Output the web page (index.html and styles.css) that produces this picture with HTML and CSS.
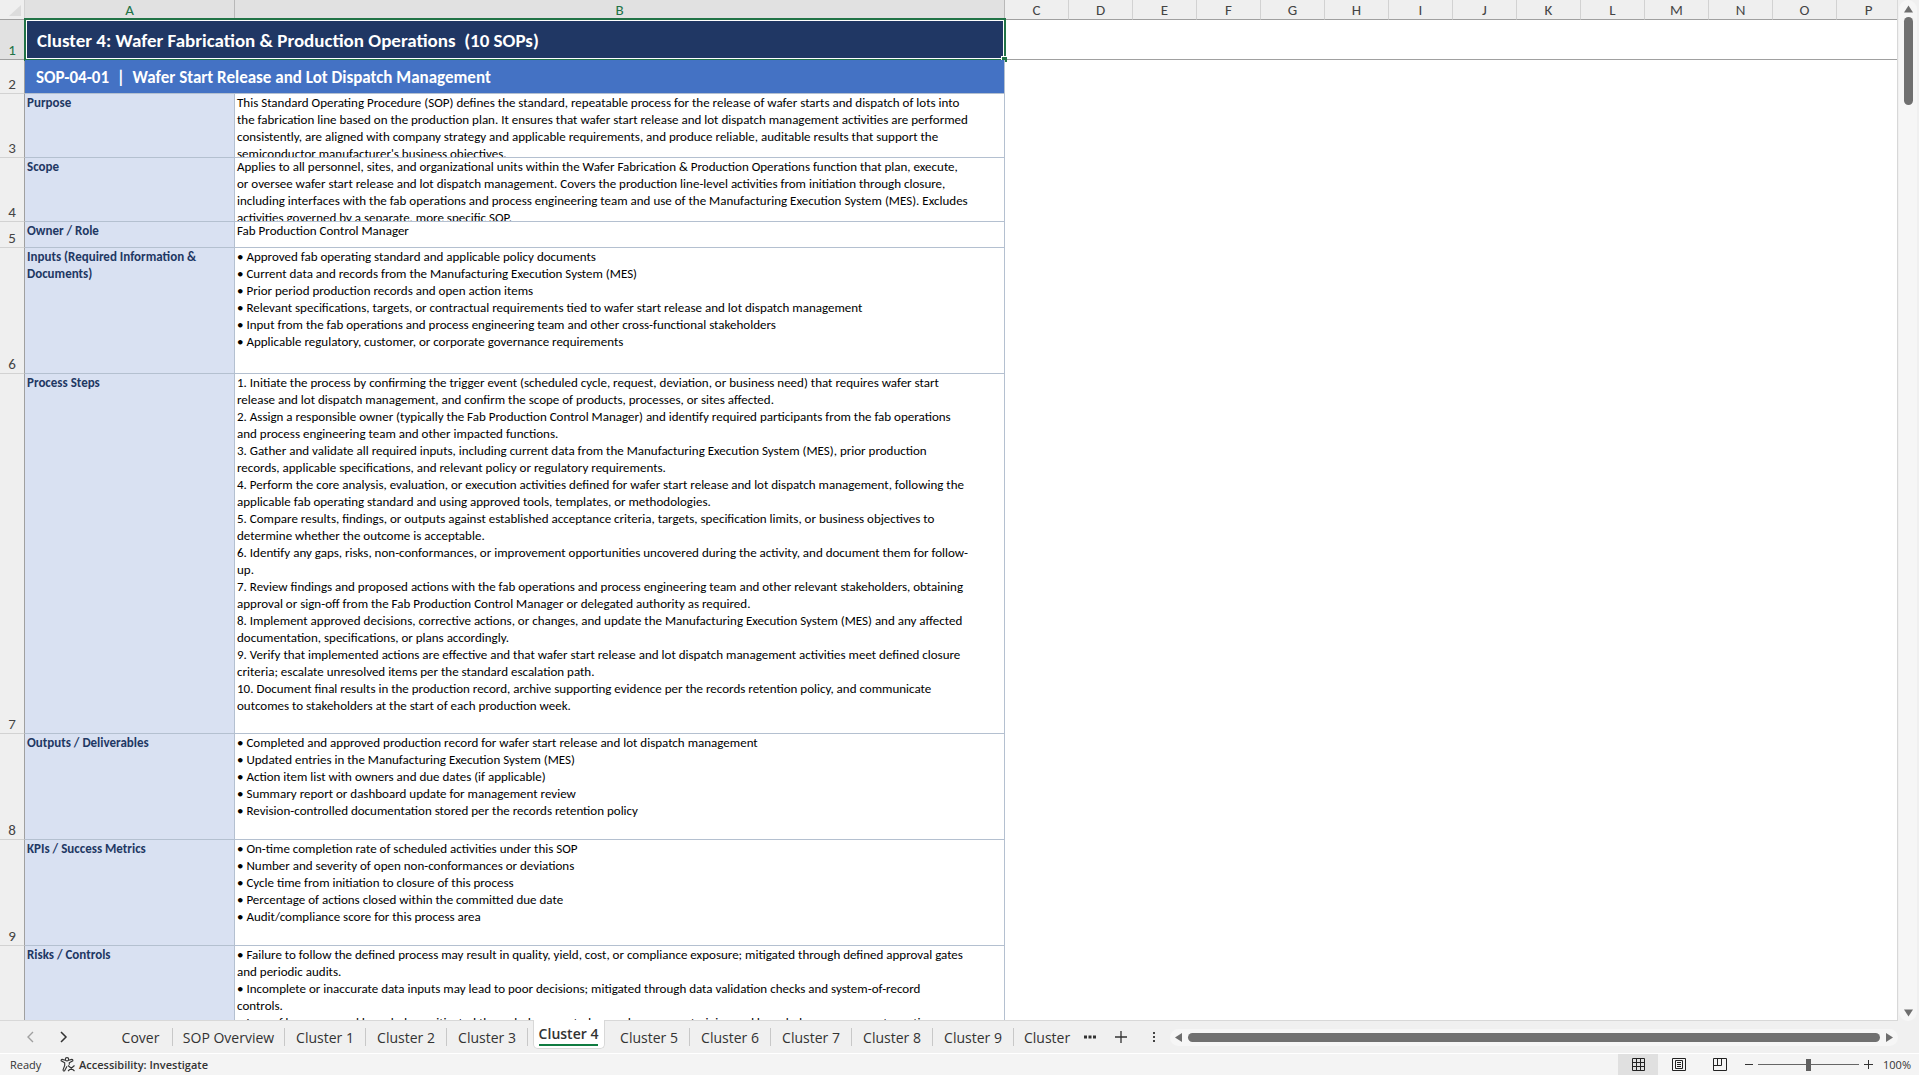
FILE: index.html
```html
<!DOCTYPE html>
<html lang="en">
<head>
<meta charset="utf-8">
<title>Cluster 4</title>
<link rel="stylesheet" href="styles.css">
</head>
<body>
<main class="workspace">
<div class="sheet">
<table class="grid">
<colgroup><col class="w-num"><col class="w-a"><col class="w-b"><col class="w-n" span="14"></colgroup>
<thead>
<tr><th class="corner"><svg width="24" height="17" viewBox="0 0 24 17"><path d="M21 3v11H9z" fill="#dcdcdc"/></svg></th><th class="on">A</th><th class="on">B</th><th>C</th><th>D</th><th>E</th><th>F</th><th>G</th><th>H</th><th>I</th><th>J</th><th>K</th><th>L</th><th>M</th><th>N</th><th>O</th><th>P</th></tr>
</thead>
<tbody>
<tr class="h40 frozen"><th class="on">1</th><td class="title" colspan="2">Cluster 4: Wafer Fabrication &amp; Production Operations&nbsp; (10 SOPs)<span class="selection"></span><span class="handle"></span></td><td colspan="14"></td></tr>
<tr class="h34"><th>2</th><td class="subtitle" colspan="2">SOP-04-01&nbsp; |&nbsp; Wafer Start Release and Lot Dispatch Management</td></tr>
<tr class="h64"><th>3</th><td class="label"><div>Purpose</div></td><td class="text"><div>This Standard Operating Procedure (SOP) defines the standard, repeatable process for the release of wafer starts and dispatch of lots into
the fabrication line based on the production plan. It ensures that wafer start release and lot dispatch management activities are performed
consistently, are aligned with company strategy and applicable requirements, and produce reliable, auditable results that support the
semiconductor manufacturer's business objectives.</div></td></tr>
<tr class="h64"><th>4</th><td class="label"><div>Scope</div></td><td class="text"><div>Applies to all personnel, sites, and organizational units within the Wafer Fabrication &amp; Production Operations function that plan, execute,
or oversee wafer start release and lot dispatch management. Covers the production line-level activities from initiation through closure,
including interfaces with the fab operations and process engineering team and use of the Manufacturing Execution System (MES). Excludes
activities governed by a separate, more specific SOP.</div></td></tr>
<tr class="h26"><th>5</th><td class="label"><div>Owner / Role</div></td><td class="text"><div>Fab Production Control Manager</div></td></tr>
<tr class="h126"><th>6</th><td class="label"><div>Inputs (Required Information &amp;
Documents)</div></td><td class="text"><div>• Approved fab operating standard and applicable policy documents
• Current data and records from the Manufacturing Execution System (MES)
• Prior period production records and open action items
• Relevant specifications, targets, or contractual requirements tied to wafer start release and lot dispatch management
• Input from the fab operations and process engineering team and other cross-functional stakeholders
• Applicable regulatory, customer, or corporate governance requirements</div></td></tr>
<tr class="h360"><th>7</th><td class="label"><div>Process Steps</div></td><td class="text"><div>1. Initiate the process by confirming the trigger event (scheduled cycle, request, deviation, or business need) that requires wafer start
release and lot dispatch management, and confirm the scope of products, processes, or sites affected.
2. Assign a responsible owner (typically the Fab Production Control Manager) and identify required participants from the fab operations
and process engineering team and other impacted functions.
3. Gather and validate all required inputs, including current data from the Manufacturing Execution System (MES), prior production
records, applicable specifications, and relevant policy or regulatory requirements.
4. Perform the core analysis, evaluation, or execution activities defined for wafer start release and lot dispatch management, following the
applicable fab operating standard and using approved tools, templates, or methodologies.
5. Compare results, findings, or outputs against established acceptance criteria, targets, specification limits, or business objectives to
determine whether the outcome is acceptable.
6. Identify any gaps, risks, non-conformances, or improvement opportunities uncovered during the activity, and document them for follow-
up.
7. Review findings and proposed actions with the fab operations and process engineering team and other relevant stakeholders, obtaining
approval or sign-off from the Fab Production Control Manager or delegated authority as required.
8. Implement approved decisions, corrective actions, or changes, and update the Manufacturing Execution System (MES) and any affected
documentation, specifications, or plans accordingly.
9. Verify that implemented actions are effective and that wafer start release and lot dispatch management activities meet defined closure
criteria; escalate unresolved items per the standard escalation path.
10. Document final results in the production record, archive supporting evidence per the records retention policy, and communicate
outcomes to stakeholders at the start of each production week.</div></td></tr>
<tr class="h106"><th>8</th><td class="label"><div>Outputs / Deliverables</div></td><td class="text"><div>• Completed and approved production record for wafer start release and lot dispatch management
• Updated entries in the Manufacturing Execution System (MES)
• Action item list with owners and due dates (if applicable)
• Summary report or dashboard update for management review
• Revision-controlled documentation stored per the records retention policy</div></td></tr>
<tr class="h106"><th>9</th><td class="label"><div>KPIs / Success Metrics</div></td><td class="text"><div>• On-time completion rate of scheduled activities under this SOP
• Number and severity of open non-conformances or deviations
• Cycle time from initiation to closure of this process
• Percentage of actions closed within the committed due date
• Audit/compliance score for this process area</div></td></tr>
<tr class="h126"><th>10</th><td class="label"><div>Risks / Controls</div></td><td class="text"><div>• Failure to follow the defined process may result in quality, yield, cost, or compliance exposure; mitigated through defined approval gates
and periodic audits.
• Incomplete or inaccurate data inputs may lead to poor decisions; mitigated through data validation checks and system-of-record
controls.
• Loss of key personnel knowledge; mitigated through documented procedures, cross-training and knowledge management practices.</div></td></tr>
</tbody>
</table>
</div>
<div class="vscroll">
<svg class="arrow" width="9" height="8" viewBox="0 0 9 8"><path d="M4.500 0.500 9 7.500H0z" fill="#6e6e6e"/></svg>
<div class="vthumb"></div>
<svg class="arrow end" width="9" height="8" viewBox="0 0 9 8"><path d="M4.500 7.500 9 .5H0z" fill="#6e6e6e"/></svg>
</div>
</main>
<nav class="tabbar">
<div class="navs">
<button aria-label="Previous sheets"><svg width="8" height="12" viewBox="0 0 8 12"><path d="M7 1 2 6l5 5" fill="none" stroke="#a0a0a0" stroke-width="1.400"/></svg></button>
<button aria-label="Next sheets"><svg width="8" height="12" viewBox="0 0 8 12"><path d="M1 1l5 5-5 5" fill="none" stroke="#333" stroke-width="1.500"/></svg></button>
</div>
<div class="tabs">
<button class="tab cover">Cover</button><button class="tab overview">SOP Overview</button><button class="tab">Cluster 1</button><button class="tab">Cluster 2</button><button class="tab">Cluster 3</button><button class="tab active"><span class="face"><span class="name">Cluster 4</span></span></button><button class="tab">Cluster 5</button><button class="tab">Cluster 6</button><button class="tab">Cluster 7</button><button class="tab">Cluster 8</button><button class="tab">Cluster 9</button><button class="tab cut">Cluster 10</button>
</div>
<button class="tool more" aria-label="More sheets"><svg width="12" height="4" viewBox="0 0 12 4"><path d="M0 .5h3v3H0zM4.500 .5h3v3h-3zM9 .5h3v3H9z" fill="#333"/></svg></button>
<button class="tool plus" aria-label="New sheet"><svg width="12" height="12" viewBox="0 0 12 12"><path d="M6 0v12M0 6h12" stroke="#333" stroke-width="1.300"/></svg></button>
<button class="tool grip" aria-label="Resize"><svg width="2" height="12" viewBox="0 0 2 12"><path d="M0 1h2v2H0zM0 5h2v2H0zM0 9h2v2H0z" fill="#444"/></svg></button>
<div class="hscroll">
<svg width="7" height="9" viewBox="0 0 7 9"><path d="M0 4.500 7 0v9z" fill="#6e6e6e"/></svg>
<div class="hthumb"></div>
<svg width="7" height="9" viewBox="0 0 7 9"><path d="M7 4.500 0 0v9z" fill="#6e6e6e"/></svg>
</div>
</nav>
<footer class="status">
<span class="ready">Ready</span>
<button class="access"><svg width="16" height="15" viewBox="0 0 16 15"><g fill="none" stroke="#333" stroke-width="1.100"><circle cx="7" cy="2.300" r="1.700"/><path d="M5.300 3.200 2.200 2.400Q.8 2.400 1.200 3.800L4.700 5.800V8.500L3 13Q3.300 14.500 4.600 13.800L7 9.300M8.700 3.200 11.800 2.400Q13.200 2.400 12.800 3.800L9.300 5.800V7.800M8 8.500l6.500 5.500M14.500 8.500 8 14"/></g></svg>Accessibility: Investigate</button>
<div class="views">
<button class="view on" aria-label="Normal"><svg width="13" height="13" viewBox="0 0 13 13"><path d="M.5 .5h12v12H.5zM4.500 .5v12M8.500 .5v12M.5 4.500h12M.5 8.500h12" fill="none" stroke="#222"/></svg></button>
<button class="view" aria-label="Page layout"><svg width="14" height="13" viewBox="0 0 14 13"><path d="M.5 .5h13v12H.5zM3.500 2.500h7v8h-7zM5 4.500h4M5 6.500h4M5 8.500h4" fill="none" stroke="#222"/></svg></button>
<button class="view" aria-label="Page break preview"><svg width="14" height="13" viewBox="0 0 14 13"><path d="M.5 .5h13v12H.5zM.5 7.500h8v-7M4.500 .5v7" fill="none" stroke="#222"/></svg></button>
</div>
<button class="zoom-btn" aria-label="Zoom out"><svg width="9" height="9" viewBox="0 0 9 9"><path d="M0 4.500h8" stroke="#333"/></svg></button>
<input class="slider" type="range" aria-label="Zoom" min="0" max="100" value="50">
<button class="zoom-btn" aria-label="Zoom in"><svg width="9" height="9" viewBox="0 0 9 9"><path d="M0 4.500h9M4.500 0v9" stroke="#333"/></svg></button>
<span class="percent">100%</span>
</footer>
</body>
</html>
```
FILE: styles.css
```css
* { box-sizing: border-box; }
html, body { height: 100%; }
body {
  margin: 0;
  display: flex;
  flex-direction: column;
  overflow: hidden;
  background: #f0f0f0;
  color: #333;
  font-family: "Open Sans", "Noto Sans", sans-serif;
}
button {
  border: 0;
  padding: 0;
  background: none;
  color: inherit;
  font: inherit;
  display: flex;
  align-items: center;
  justify-content: center;
}
svg { display: block; flex: none; }

.workspace { flex: 1; min-height: 0; display: flex; }
.sheet {
  flex: 1;
  min-width: 0;
  overflow: hidden;
  background: #fff;
  border-right: 1px solid #d8d8d8;
  border-bottom: 1px solid #d8d8d8;
}
.grid {
  width: 1901px;
  table-layout: fixed;
  border-collapse: separate;
  border-spacing: 0;
  font-family: Carlito, Lato, sans-serif;
}
.w-num { width: 25px; }
.w-a { width: 210px; }
.w-b { width: 770px; }
.w-n { width: 64px; }
th, td { padding: 0; }
thead th {
  height: 20px;
  padding-top: 2px;
  background: #efefef;
  border-right: 1px solid #d2d2d2;
  border-bottom: 1px solid #a0a0a0;
  color: #444;
  font-size: 15px;
  font-weight: 400;
  line-height: 17px;
}
thead th.on { background: #e1e1e1; color: #217346; border-right-color: #b8b8b8; }
tbody th {
  background: #efefef;
  border-right: 1px solid #a0a0a0;
  border-bottom: 1px solid #d2d2d2;
  vertical-align: bottom;
  color: #444;
  font-size: 15px;
  font-weight: 400;
  line-height: 17px;
}
tbody th.on { background: #e1e1e1; color: #217346; }
.frozen > * { border-bottom: 1px solid #a0a0a0; }
.title, .subtitle {
  position: relative;
  padding: 2px 0 0 12px;
  color: #fff;
  font-weight: 700;
  white-space: nowrap;
}
.title { background: #203764; font-size: 19px; }
.subtitle {
  padding-left: 11px;
  background: #4472c4;
  border-right: 1px solid #b4c0d0;
  border-bottom: 1px solid #b4c0d0;
  font-size: 17px;
}
.selection {
  position: absolute;
  inset: -2px -1px -2px -1px;
  border: 2px solid #217346;
  box-shadow: inset 0 0 0 1px #fff;
}
.handle {
  position: absolute;
  right: -2px;
  bottom: -3px;
  width: 6px;
  height: 6px;
  background: #217346;
  border: solid #fff;
  border-width: 1px 0 0 1px;
}
.label, .text {
  vertical-align: top;
  border-right: 1px solid #b4c0d0;
  border-bottom: 1px solid #b4c0d0;
  font-size: 13px;
  line-height: 17px;
  white-space: pre;
}
.label { background: #d9e1f2; color: #1f3864; font-weight: 700; }
.text { color: #000; }
.label div, .text div { padding: 0 2px; overflow: hidden; }
.h40 { height: 40px; }
.h34 { height: 34px; }
.h64 { height: 64px; }
.h64 div { height: 63px; }
.h26 { height: 26px; }
.h26 div { height: 25px; }
.h126 { height: 126px; }
.h126 div { height: 125px; }
.h360 { height: 360px; }
.h360 div { height: 359px; }
.h106 { height: 106px; }
.h106 div { height: 105px; }

.vscroll {
  width: 18px;
  margin: 0 2px 0 1px;
  padding: 5px 0 4px;
  display: flex;
  flex-direction: column;
  align-items: center;
  background: #f6f6f6;
  border-radius: 9px;
}
.vthumb { width: 9px; height: 88px; margin-top: 4px; border-radius: 5px; background: #707070; }
.arrow.end { margin-top: auto; }

.tabbar {
  height: 32px;
  display: flex;
  align-items: center;
  padding-right: 21px;
  font-size: 14px;
}
.navs { width: 109px; display: flex; gap: 26px; padding-left: 26px; }
.tabs { display: flex; height: 32px; align-items: center; }
.tab { width: 81px; height: 18px; border-right: 1px solid #c8c8c8; white-space: nowrap; }
.tab.cover { width: 64px; }
.tab.overview { width: 112px; }
.tab.active {
  height: 32px;
  align-items: flex-start;
  border: 0;
  font-weight: 600;
}
.face {
  position: relative;
  width: 72px;
  height: 29px;
  margin-top: -1px;
  display: flex;
  justify-content: center;
  align-items: flex-start;
  background: #fff;
  border: 1px solid #d8d8d8;
  border-top: 0;
  border-radius: 0 0 5px 5px;
}
.name { height: 26px; padding-top: 4px; line-height: 19px; border-bottom: 2px solid #107c41; }
.tab.cut { width: 60px; border: 0; padding-left: 10px; justify-content: flex-start; overflow: hidden; }
.tool { width: 26px; height: 24px; }
.more { margin-left: 3px; }
.plus { margin-left: 5px; }
.grip { margin-left: 7px; }
.hscroll {
  flex: 1;
  height: 17px;
  display: flex;
  align-items: center;
  gap: 6px;
  padding: 0 5px;
  margin-left: 3px;
  background: #f6f6f6;
  border-radius: 9px;
}
.hthumb { flex: 1; height: 9px; border-radius: 5px; background: #707070; }

.status {
  height: 22px;
  display: flex;
  align-items: center;
  background: #f4f4f4;
  border-top: 1px solid #fff;
  font-size: 11px;
  line-height: 16px;
}
.ready { width: 60px; padding-left: 10px; }
.access { gap: 3px; font-weight: 600; }
.views { display: flex; gap: 1px; align-self: stretch; margin-left: auto; }
.view { width: 40px; }
.view.on { background: #e0e0e0; }
.zoom-btn { width: 18px; height: 20px; }
.slider { appearance: none; width: 101px; height: 12px; margin: 0; background: none; }
.slider::-webkit-slider-runnable-track { height: 12px; background: linear-gradient(#666, #666) center / 100% 1px no-repeat; }
.slider::-webkit-slider-thumb { appearance: none; width: 5px; height: 12px; background: #606060; }
.percent { width: 42px; padding-right: 8px; text-align: right; }
```
